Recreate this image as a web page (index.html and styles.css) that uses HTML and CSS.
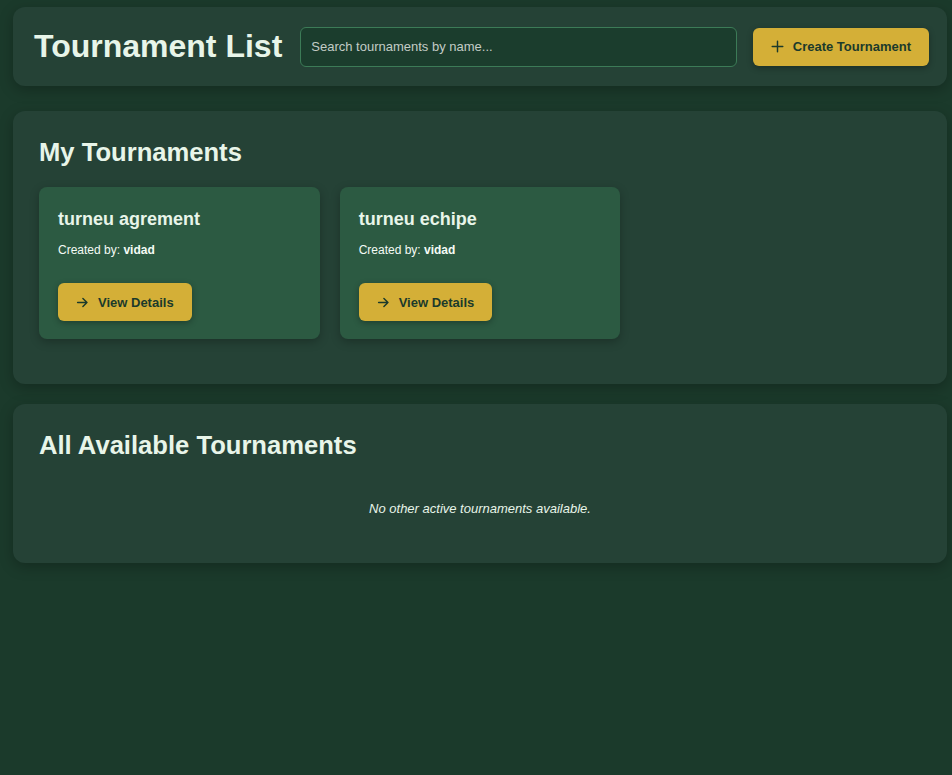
FILE: index.html
```html
<!DOCTYPE html>
<html lang="en">
<head>
<meta charset="utf-8">
<title>Tournament List</title>
<link rel="stylesheet" href="styles.css">
</head>
<body>
<div class="page">
  <header class="topbar">
    <h1 class="page-title">Tournament List</h1>
    <input class="search" type="text" placeholder="Search tournaments by name...">
    <button class="btn btn-create">
      <svg class="icon" viewBox="0 0 16 16" width="13" height="13"><path d="M8 1.5v13M1.5 8h13" stroke="currentColor" stroke-width="1.8" fill="none" stroke-linecap="round"/></svg>
      <span>Create Tournament</span>
    </button>
  </header>

  <section class="panel">
    <h2 class="panel-title">My Tournaments</h2>
    <div class="grid">
      <div class="card">
        <h3 class="card-title">turneu agrement</h3>
        <p class="card-meta">Created by: <strong>vidad</strong></p>
        <button class="btn btn-view">
          <svg class="icon" viewBox="0 0 16 16" width="13" height="13"><path d="M2 8h11.5M8.5 3l5 5-5 5" stroke="currentColor" stroke-width="1.8" fill="none" stroke-linecap="round" stroke-linejoin="round"/></svg>
          <span>View Details</span>
        </button>
      </div>
      <div class="card">
        <h3 class="card-title">turneu echipe</h3>
        <p class="card-meta">Created by: <strong>vidad</strong></p>
        <button class="btn btn-view">
          <svg class="icon" viewBox="0 0 16 16" width="13" height="13"><path d="M2 8h11.5M8.5 3l5 5-5 5" stroke="currentColor" stroke-width="1.8" fill="none" stroke-linecap="round" stroke-linejoin="round"/></svg>
          <span>View Details</span>
        </button>
      </div>
    </div>
  </section>

  <section class="panel panel-all">
    <h2 class="panel-title">All Available Tournaments</h2>
    <p class="empty">No other active tournaments available.</p>
  </section>
</div>
</body>
</html>
```

FILE: styles.css
```css
* { box-sizing: border-box; }

html, body {
  margin: 0;
  padding: 0;
}

body {
  background: #1b3a2b;
  font-family: "Liberation Sans", Arial, sans-serif;
  color: #e8f5e9;
  min-height: 775px;
}

.page {
  padding: 7px 5px 20px 13px;
}

.topbar {
  display: flex;
  align-items: center;
  gap: 19px;
  background: #254236;
  border-radius: 12px;
  height: 79px;
  padding: 0 18px 0 21px;
  box-shadow: 0 4px 14px rgba(0, 0, 0, 0.25);
}

.page-title {
  margin: 0;
  font-size: 32px;
  font-weight: 700;
  color: #e8f5e9;
  white-space: nowrap;
}

.search {
  flex: 1;
  height: 40px;
  background: #1b3d2d;
  border: 1px solid #3c7b57;
  border-radius: 6px;
  padding: 0 10px;
  font-family: "Liberation Sans", Arial, sans-serif;
  font-size: 13px;
  color: #e8f5e9;
  margin-left: -1px;
  margin-right: -3px;
}

.search::placeholder {
  color: #c3ccc6;
}

.btn {
  display: inline-flex;
  align-items: center;
  gap: 9px;
  background: #d4af37;
  color: #1b3a2b;
  border: none;
  border-radius: 6px;
  font-family: "Liberation Sans", Arial, sans-serif;
  font-weight: 700;
  font-size: 13px;
  white-space: nowrap;
  box-shadow: 0 2px 6px rgba(0, 0, 0, 0.3);
  cursor: pointer;
}

.btn-create {
  height: 38px;
  padding: 0 18px;
}

.panel {
  margin-top: 25px;
  background: #254236;
  border-radius: 12px;
  padding: 26px 26px 45px;
  box-shadow: 0 4px 14px rgba(0, 0, 0, 0.25);
}

.panel-title {
  margin: 0 0 20px;
  font-size: 25.6px;
  font-weight: 700;
  color: #e8f5e9;
  line-height: 30px;
}

.grid {
  display: grid;
  grid-template-columns: repeat(auto-fill, minmax(280px, 1fr));
  gap: 20px;
}

.card {
  background: #2c5a42;
  border-radius: 8px;
  padding: 21px 19px 18px;
  box-shadow: 0 3px 10px rgba(0, 0, 0, 0.25);
}

.card-title {
  margin: 0;
  font-size: 18px;
  font-weight: 700;
  line-height: 22px;
  color: #e8f5e9;
}

.card-meta {
  margin: 12px 0 0;
  font-size: 12px;
  line-height: 16px;
  color: #f4fbf5;
}

.card-meta strong {
  font-weight: 700;
}

.btn-view {
  margin-top: 25px;
  height: 38px;
  padding: 0 18px;
}

.panel-all {
  margin-top: 20px;
  padding-bottom: 46px;
}

.panel-all .panel-title {
  margin-bottom: 41px;
}

.empty {
  margin: 0;
  text-align: center;
  font-style: italic;
  font-size: 13px;
  line-height: 16px;
  color: #e8f5e9;
}
```
